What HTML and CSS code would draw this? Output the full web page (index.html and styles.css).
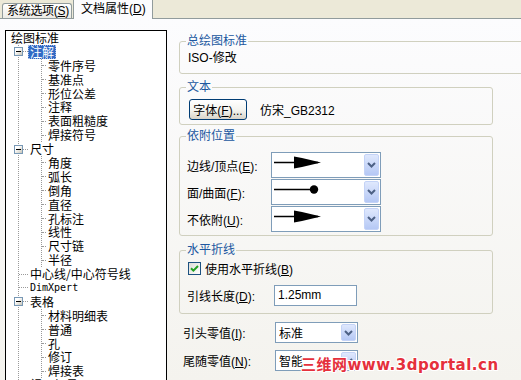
FILE: index.html
```html
<!DOCTYPE html>
<html lang="zh-CN">
<head>
    <meta charset="UTF-8">
    <meta name="viewport" content="width=device-width, initial-scale=1.0">
    <title>文档属性</title>
    <link rel="stylesheet" href="styles.css">
</head>
<body>
    <div class="tabs">
        <div class="tab">系统选项(<u>S</u>)</div>
        <div class="tab active">文档属性(<u>D</u>)</div>
    </div>
    <div class="pane">
        <div class="tree">
            <div class="row root"><span class="label">绘图标准</span></div>
            <ul class="lvl1">
                <li>
                    <div class="row"><span class="box"></span><span class="link"></span><span class="label sel">注解</span></div>
                    <ul class="lvl2">
                        <li><div class="row"><span class="link"></span><span class="label">零件序号</span></div></li>
                        <li><div class="row"><span class="link"></span><span class="label">基准点</span></div></li>
                        <li><div class="row"><span class="link"></span><span class="label">形位公差</span></div></li>
                        <li><div class="row"><span class="link"></span><span class="label">注释</span></div></li>
                        <li><div class="row"><span class="link"></span><span class="label">表面粗糙度</span></div></li>
                        <li><div class="row"><span class="link"></span><span class="label">焊接符号</span></div></li>
                    </ul>
                </li>
                <li>
                    <div class="row"><span class="box"></span><span class="link"></span><span class="label">尺寸</span></div>
                    <ul class="lvl2">
                        <li><div class="row"><span class="link"></span><span class="label">角度</span></div></li>
                        <li><div class="row"><span class="link"></span><span class="label">弧长</span></div></li>
                        <li><div class="row"><span class="link"></span><span class="label">倒角</span></div></li>
                        <li><div class="row"><span class="link"></span><span class="label">直径</span></div></li>
                        <li><div class="row"><span class="link"></span><span class="label">孔标注</span></div></li>
                        <li><div class="row"><span class="link"></span><span class="label">线性</span></div></li>
                        <li><div class="row"><span class="link"></span><span class="label">尺寸链</span></div></li>
                        <li><div class="row"><span class="link"></span><span class="label">半径</span></div></li>
                    </ul>
                </li>
                <li><div class="row"><span class="link"></span><span class="label">中心线/中心符号线</span></div></li>
                <li><div class="row"><span class="link"></span><span class="label mono">DimXpert</span></div></li>
                <li>
                    <div class="row"><span class="box"></span><span class="link"></span><span class="label">表格</span></div>
                    <ul class="lvl2">
                        <li><div class="row"><span class="link"></span><span class="label">材料明细表</span></div></li>
                        <li><div class="row"><span class="link"></span><span class="label">普通</span></div></li>
                        <li><div class="row"><span class="link"></span><span class="label">孔</span></div></li>
                        <li><div class="row"><span class="link"></span><span class="label">修订</span></div></li>
                        <li><div class="row"><span class="link"></span><span class="label">焊接表</span></div></li>
                    </ul>
                </li>
                <li><div class="row"><span class="box"></span><span class="link"></span><span class="label">视图标号</span></div></li>
            </ul>
        </div>

        <div class="main">
            <fieldset class="grp g1">
                <legend>总绘图标准</legend>
                <div class="line">ISO-修改</div>
            </fieldset>

            <fieldset class="grp g2">
                <legend>文本</legend>
                <div class="font-row">
                    <button class="xp-btn">字体(<u>F</u>)...</button>
                    <span class="font-name">仿宋_GB2312</span>
                </div>
            </fieldset>

            <fieldset class="grp g3">
                <legend>依附位置</legend>
                <div class="field">
                    <label class="lbl">边线/顶点(<u>E</u>):</label>
                    <div class="combo tall">
                        <svg class="sym" width="60" height="24" viewBox="0 0 60 24">
                            <line x1="0" y1="9.5" x2="44" y2="9.5" stroke="#000" stroke-width="1.4"/>
                            <polygon points="20,3.5 28,5 47,9.5 28,14 20,15.5" fill="#000"/>
                        </svg>
                        <span class="drop"><svg width="9" height="6" viewBox="0 0 9 6"><path d="M1 1 L4.5 4.5 L8 1" fill="none" stroke="#4d6185" stroke-width="2"/></svg></span>
                    </div>
                </div>
                <div class="field">
                    <label class="lbl">面/曲面(<u>F</u>):</label>
                    <div class="combo tall">
                        <svg class="sym" width="60" height="24" viewBox="0 0 60 24">
                            <line x1="0" y1="9.5" x2="40" y2="9.5" stroke="#000" stroke-width="1.4"/>
                            <circle cx="40" cy="9.5" r="4.2" fill="#000"/>
                        </svg>
                        <span class="drop"><svg width="9" height="6" viewBox="0 0 9 6"><path d="M1 1 L4.5 4.5 L8 1" fill="none" stroke="#4d6185" stroke-width="2"/></svg></span>
                    </div>
                </div>
                <div class="field">
                    <label class="lbl">不依附(<u>U</u>):</label>
                    <div class="combo tall">
                        <svg class="sym" width="60" height="24" viewBox="0 0 60 24">
                            <line x1="0" y1="9.5" x2="44" y2="9.5" stroke="#000" stroke-width="1.4"/>
                            <polygon points="20,3.5 28,5 47,9.5 28,14 20,15.5" fill="#000"/>
                        </svg>
                        <span class="drop"><svg width="9" height="6" viewBox="0 0 9 6"><path d="M1 1 L4.5 4.5 L8 1" fill="none" stroke="#4d6185" stroke-width="2"/></svg></span>
                    </div>
                </div>
            </fieldset>

            <fieldset class="grp g4">
                <legend>水平折线</legend>
                <div class="check-row">
                    <span class="check"><svg width="11" height="11" viewBox="0 0 11 11"><path d="M2 5.2 L4.4 7.6 L9 3" fill="none" stroke="#21a121" stroke-width="2"/></svg></span>
                    <span>使用水平折线(<u>B</u>)</span>
                </div>
                <div class="field len">
                    <label class="lbl">引线长度(<u>D</u>):</label>
                    <div class="input">1.25mm</div>
                </div>
            </fieldset>

            <div class="field zero first">
                <label class="lbl">引头零值(<u>I</u>):</label>
                <div class="combo small">
                    <span class="val">标准</span>
                    <span class="drop"><svg width="9" height="6" viewBox="0 0 9 6"><path d="M1 1 L4.5 4.5 L8 1" fill="none" stroke="#4d6185" stroke-width="2"/></svg></span>
                </div>
            </div>
            <div class="field zero">
                <label class="lbl">尾随零值(<u>N</u>):</label>
                <div class="combo small">
                    <span class="val">智能</span>
                    <span class="drop"><svg width="9" height="6" viewBox="0 0 9 6"><path d="M1 1 L4.5 4.5 L8 1" fill="none" stroke="#4d6185" stroke-width="2"/></svg></span>
                </div>
            </div>
        </div>
    </div>
    <div class="watermark">三维网www.3dportal.cn</div>
</body>
</html>
```

FILE: styles.css
```css
body {
    margin: 0;
    width: 521px;
    height: 380px;
    overflow: hidden;
    position: relative;
    background: #ece9d8;
    font-family: "Liberation Sans", "Noto Sans CJK SC", sans-serif;
    font-size: 12px;
    color: #000;
}

/* tab strip */
.tabs {
    height: 18px;
    display: flex;
    align-items: flex-end;
    padding-left: 2px;
    border-bottom: 1px solid #919b9c;
}
.tab {
    box-sizing: border-box;
    width: 70px;
    height: 15px;
    padding: 0 0 0 4px;
    line-height: 14px;
    letter-spacing: -0.3px;
    border: 1px solid #919b9c;
    border-bottom: none;
    border-radius: 3px 3px 0 0;
    background: linear-gradient(#ffffff, #ecebe5);
    white-space: nowrap;
}
.tab.active {
    width: 80px;
    height: 19px;
    margin-left: 1px;
    margin-bottom: -1px;
    padding-left: 7px;
    line-height: 18px;
    letter-spacing: 0;
    border-top: none;
    border-radius: 0;
    background: #fcfcfe;
}

.pane {
    height: 361px;
    display: flex;
    align-items: flex-start;
    overflow: hidden;
    background: linear-gradient(#fcfcfe, #f4f3ee);
}

/* tree */
.tree {
    box-sizing: border-box;
    flex-shrink: 0;
    width: 162px;
    height: 400px;
    margin: 11px 0 0 5px;
    border: 1px solid #000;
    background: #fff;
    font-family: "Noto Sans CJK SC", sans-serif;
}
.tree ul {
    list-style: none;
    margin: 0;
    padding: 0;
}
.row {
    display: flex;
    align-items: center;
    height: 13.9px;
    white-space: nowrap;
}
.root {
    padding-left: 3px;
}
.label {
    padding: 0 2px;
    line-height: 13.9px;
}
.label.sel {
    background: #316ac5;
    color: #fff;
    outline: 1px dotted #a8bde3;
    outline-offset: -1px;
}
.label.mono {
    font-family: "DejaVu Sans Mono", monospace;
    font-size: 10px;
}
.tree .lvl1 {
    margin-left: 12px;
    border-left: 1px dotted #9a9a9a;
}
.tree .lvl2 {
    margin-left: 22px;
    border-left: 1px dotted #9a9a9a;
}
.link {
    flex-shrink: 0;
    width: 9px;
    border-top: 1px dotted #9a9a9a;
}
.box + .link {
    width: 5px;
}
.lvl2 .link {
    width: 4px;
}
.box {
    flex-shrink: 0;
    box-sizing: border-box;
    width: 9px;
    height: 9px;
    margin-left: -5px;
    border: 1px solid #7898b5;
    background: linear-gradient(135deg, #ffffff 30%, #c8c5b8);
    display: flex;
    align-items: center;
    justify-content: center;
}
.box::before {
    content: "";
    width: 5px;
    height: 1px;
    background: #000;
}

/* right side */
.main {
    flex-shrink: 0;
    width: 314px;
    margin-left: 12px;
    padding-top: 15px;
}
.grp {
    box-sizing: border-box;
    min-width: 0;
    margin: 0;
    padding: 3px 8px 8px;
    border: 1px solid #d0d0bf;
    border-radius: 3px;
}
.grp legend {
    padding: 0 1px;
    margin-left: -2px;
    line-height: 14px;
    color: #21579f;
}
.g1 {
    width: 400px;
}
.line {
    line-height: 14px;
}
.g2 {
    margin-top: 6px;
    padding: 5px 8px 4px;
}
.font-row {
    display: flex;
    align-items: center;
}
.xp-btn {
    box-sizing: border-box;
    width: 58px;
    height: 21px;
    margin: 0 0 0 1px;
    padding: 0;
    border: 1px solid #003c74;
    border-radius: 3px;
    background: linear-gradient(#ffffff, #f3f3ee 55%, #d8d3c8);
    font: inherit;
    color: #000;
}
.font-name {
    margin-left: 13px;
}
.g3 {
    margin-top: 4px;
    padding: 9px 8px 3px;
}
.field {
    display: flex;
    align-items: center;
}
.field + .field {
    margin-top: 1px;
}
.lbl {
    flex-shrink: 0;
    width: 84px;
    margin-left: -1px;
    white-space: nowrap;
}
.combo {
    box-sizing: border-box;
    display: flex;
    align-items: center;
    border: 1px solid #7f9db9;
    background: #fff;
}
.combo.tall {
    width: 110px;
    height: 26px;
    align-items: flex-start;
}
.sym {
    margin-left: 2px;
}
.drop {
    box-sizing: border-box;
    align-self: stretch;
    width: 15px;
    margin: 1px 1px 1px auto;
    border: 1px solid #c4d3f7;
    border-radius: 2px;
    background: linear-gradient(#dfe8fd, #b5c8f5);
    display: flex;
    align-items: center;
    justify-content: center;
}
.g4 {
    margin-top: 7px;
    padding: 5px 8px 7px;
}
.check-row {
    display: flex;
    align-items: center;
    height: 13px;
}
.check {
    box-sizing: border-box;
    width: 13px;
    height: 13px;
    margin-right: 4px;
    border: 1px solid #1c5180;
    background: linear-gradient(135deg, #dcdcd6, #ffffff);
    display: flex;
    align-items: center;
    justify-content: center;
}
.field.len {
    margin-top: 10px;
}
.len .lbl {
    width: 87px;
}
.input {
    box-sizing: border-box;
    width: 83px;
    height: 21px;
    padding-left: 3px;
    line-height: 19px;
    border: 1px solid #7f9db9;
    background: #fff;
}
.zero {
    padding-left: 4px;
}
.zero .lbl {
    width: 92px;
    margin-left: 0;
}
.zero.first {
    margin-top: 8px;
}
.field.zero + .field.zero {
    margin-top: 7px;
}
.combo.small {
    width: 83px;
    height: 21px;
}
.val {
    padding-left: 3px;
}

/* site watermark stamped over the capture */
.watermark {
    position: absolute;
    left: 301px;
    top: 356px;
    font-family: "DejaVu Sans", "Noto Sans CJK SC", sans-serif;
    font-weight: bold;
    font-size: 15px;
    line-height: 18px;
    letter-spacing: 0.5px;
    color: #e5303c;
    white-space: nowrap;
    text-shadow: 1px 0 #fff, -1px 0 #fff, 0 1px #fff, 0 -1px #fff,
        1px 1px #fff, -1px -1px #fff, 1px -1px #fff, -1px 1px #fff;
}
```
